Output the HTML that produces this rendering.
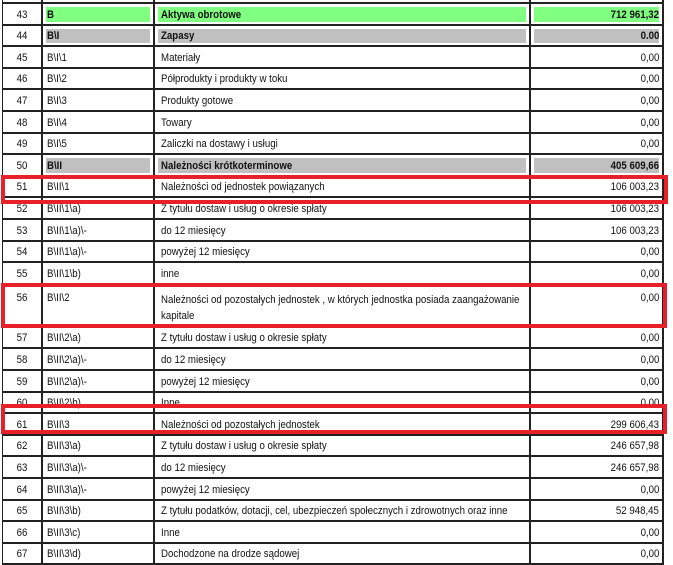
<!DOCTYPE html>
<html><head><meta charset="utf-8"><style>
body{margin:0;width:673px;height:563px;overflow:hidden;background:#fff;position:relative;font-family:"Liberation Sans",sans-serif;font-size:11px;color:#111;}
.r{position:absolute;left:2px;width:662px;border-bottom:2px solid #222;box-sizing:border-box;}
.c{position:absolute;top:0;bottom:0;}
.n{left:0;width:41px;text-align:center;border-left:1px solid #222;border-right:2px solid #222;box-sizing:border-box}
.k{left:41px;width:112px;border-right:2px solid #222;box-sizing:border-box;padding-left:4px}
.d{left:153px;width:376px;border-right:2px solid #222;box-sizing:border-box;padding-left:5px}
.v{left:529px;width:133px;border-right:2px solid #222;box-sizing:border-box;text-align:right;padding-right:3px}
.t{position:absolute;bottom:3px;white-space:nowrap;transform:scaleX(0.88);transform-origin:left center}
.k .t{left:4px}.d .t{left:6px}
.n .t{left:0;right:0;transform-origin:center}
.v .t{right:3px;transform-origin:right center}
.g .k .f,.g .d .f,.g .v .f{position:absolute;left:3px;right:3px;top:3px;bottom:2px;background:#80ff80}
.s .k .f,.s .d .f,.s .v .f{position:absolute;left:3px;right:3px;top:3px;bottom:2px;background:#c0c0c0}
.b .k .t,.b .d .t,.b .v .t{font-weight:bold}
.box{position:absolute;border:4px solid #e8202a;box-sizing:border-box}
</style></head><body>
<div class="r" style="top:-18px;height:22px"><div class="c n"></div><div class="c k"></div><div class="c d"></div><div class="c v"></div></div>
<div id="rows"></div>
<script>
var rows=[
["43","B","Aktywa obrotowe","712 961,32","g b"],
["44","B\\I","Zapasy","0.00","s b"],
["45","B\\I\\1","Materiały","0,00",""],
["46","B\\I\\2","Półprodukty i produkty w toku","0,00",""],
["47","B\\I\\3","Produkty gotowe","0,00",""],
["48","B\\I\\4","Towary","0,00",""],
["49","B\\I\\5","Zaliczki na dostawy i usługi","0,00",""],
["50","B\\II","Należności krótkoterminowe","405 609,66","s b"],
["51","B\\II\\1","Należności od jednostek powiązanych","106 003,23",""],
["52","B\\II\\1\\a)","Z tytułu dostaw i usług o okresie spłaty","106 003,23",""],
["53","B\\II\\1\\a)\\-","do 12 miesięcy","106 003,23",""],
["54","B\\II\\1\\a)\\-","powyżej 12 miesięcy","0,00",""],
["55","B\\II\\1\\b)","inne","0,00",""],
["56","B\\II\\2","Należności od pozostałych jednostek , w których jednostka posiada zaangażowanie<br>kapitale","0,00","tall"],
["57","B\\II\\2\\a)","Z tytułu dostaw i usług o okresie spłaty","0,00",""],
["58","B\\II\\2\\a)\\-","do 12 miesięcy","0,00",""],
["59","B\\II\\2\\a)\\-","powyżej 12 miesięcy","0,00",""],
["60","B\\II\\2\\b)","Inne","0,00",""],
["61","B\\II\\3","Należności od pozostałych jednostek","299 606,43",""],
["62","B\\II\\3\\a)","Z tytułu dostaw i usług o okresie spłaty","246 657,98",""],
["63","B\\II\\3\\a)\\-","do 12 miesięcy","246 657,98",""],
["64","B\\II\\3\\a)\\-","powyżej 12 miesięcy","0,00",""],
["65","B\\II\\3\\b)","Z tytułu podatków, dotacji, cel, ubezpieczeń społecznych i zdrowotnych oraz inne","52 948,45",""],
["66","B\\II\\3\\c)","Inne","0,00",""],
["67","B\\II\\3\\d)","Dochodzone na drodze sądowej","0,00",""]];
var y=4,h="";
rows.forEach(function(r){
 var tall=r[4]=="tall",hh=tall?43:21.6;
 var top=tall?"top:7px;bottom:auto":"";
 h+='<div class="r '+r[4]+'" style="top:'+y+'px;height:'+hh+'px">'+
 '<div class="c n"><span class="t" style="'+top+'">'+r[0]+'</span></div>'+
 '<div class="c k"><span class="f"></span><span class="t" style="'+top+'">'+r[1]+'</span></div>'+
 '<div class="c d"><span class="f"></span><span class="t" style="'+(tall?"top:7px;bottom:auto;line-height:16px":"")+'">'+r[2]+'</span></div>'+
 '<div class="c v"><span class="f"></span><span class="t" style="'+top+'">'+r[3]+'</span></div></div>';
 y+=hh;});
document.getElementById("rows").innerHTML=h;
</script>
<div class="box" style="left:1px;top:175px;width:667px;height:29px"></div>
<div class="box" style="left:1px;top:283px;width:666px;height:45px"></div>
<div class="box" style="left:1px;top:404px;width:666px;height:30px"></div>
</body></html>
